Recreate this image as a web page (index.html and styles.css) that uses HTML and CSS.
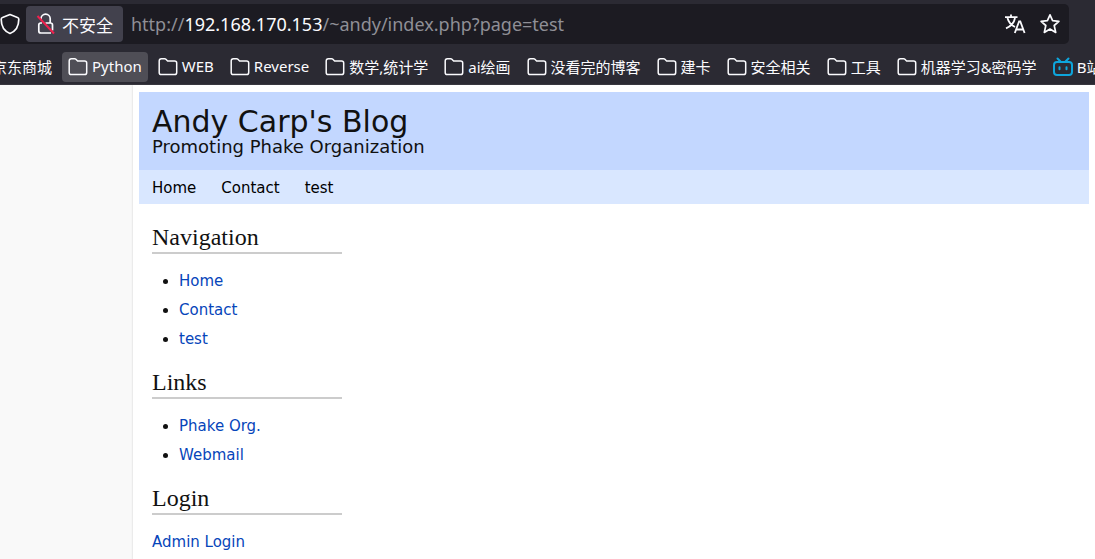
FILE: index.html
```html
<!DOCTYPE html>
<html lang="zh-CN">
<head>
<meta charset="utf-8">
<title>Andy Carp's Blog</title>
<link rel="stylesheet" href="styles.css">
</head>
<body>
<svg class="defs" aria-hidden="true">
  <symbol id="folder" viewBox="0 0 20 20"><path d="M1.2 15.5V4q0-2.2 2.2-2.2h3.200q.8 0 1.300.5l1.700 1.700h7q2.100 0 2.100 2.100v9.400q0 2.100-2.100 2.100H3.400q-2.200 0-2.200-2.100z" fill="none" stroke="currentColor" stroke-width="1.500" stroke-linejoin="round"/></symbol>
</svg>
<header class="chrome">
  <div class="urlbar">
    <button class="icon-button shield" aria-label="Tracking protection"><svg width="20" height="22" viewBox="0 0 20 22"><path d="M10 1.500 17.500 4.500c.9.300 1.300.9 1.300 1.800C18.800 13 16 18.200 10 20.500 4 18.200 1.200 13 1.200 6.300c0-.9.4-1.500 1.300-1.800z" fill="none" stroke="currentColor" stroke-width="1.700" stroke-linejoin="round"/></svg></button>
    <button class="security"><svg width="20" height="22" viewBox="0 0 20 22" fill="none" stroke="currentColor" stroke-width="1.700"><path d="M5 6.500V5.800a4.600 4.600 0 0 1 9.200 0v4M6 10H4.800q-2 0-2 2v6q0 2 2 2h10.200M9.500 10h5q2 0 2 2v5.500"/><path d="M1.500 3 18 20.500" stroke="#f0204e" stroke-width="2"/></svg><span>不安全</span></button>
    <div class="address" role="textbox" contenteditable="true" aria-label="Address" spellcheck="false">http://<span class="host">192.168.170.153</span>/~andy/index.php?page=test</div>
    <button class="icon-button" aria-label="Translate"><svg width="22" height="22" viewBox="0 0 22 22" fill="none" stroke="currentColor" stroke-width="1.800"><path d="M1 4.200h12.500M7 1.500v2.700M3.500 5c1 4.200 4.500 7.500 7.500 9M11 5c-.8 4.500-4.700 8.500-9 10.300M10.800 20l4.300-11.500h1.200L20.600 20M12.300 16.500h6.800"/></svg></button>
    <button class="icon-button" aria-label="Bookmark this page"><svg width="22" height="22" viewBox="0 0 22 22"><path d="m11 1.800 2.600 5.800 6.300.7-4.700 4.200 1.500 6.900L11 16.100l-5.700 3.300 1.500-6.900-4.700-4.200 6.300-.7z" fill="none" stroke="currentColor" stroke-width="1.700" stroke-linejoin="round"/></svg></button>
  </div>
  <nav class="bookmarks" aria-label="Bookmarks">
    <button class="bookmark">京东商城</button>
    <button class="bookmark active"><svg><use href="#folder"/></svg>Python</button>
    <button class="bookmark"><svg><use href="#folder"/></svg>WEB</button>
    <button class="bookmark"><svg><use href="#folder"/></svg>Reverse</button>
    <button class="bookmark"><svg><use href="#folder"/></svg>数学,统计学</button>
    <button class="bookmark"><svg><use href="#folder"/></svg>ai绘画</button>
    <button class="bookmark"><svg><use href="#folder"/></svg>没看完的博客</button>
    <button class="bookmark"><svg><use href="#folder"/></svg>建卡</button>
    <button class="bookmark"><svg><use href="#folder"/></svg>安全相关</button>
    <button class="bookmark"><svg><use href="#folder"/></svg>工具</button>
    <button class="bookmark"><svg><use href="#folder"/></svg>机器学习&amp;密码学</button>
    <button class="bookmark"><svg class="bili" viewBox="0 0 20 20" fill="none" stroke="currentColor" stroke-width="2" stroke-linecap="round"><rect x="1" y="5" width="18" height="13" rx="3"/><path d="m4.500 1.500 3 3M15.500 1.500l-3 3M6.500 10.300v2M13.500 10.300v2"/></svg>B站</button>
  </nav>
</header>
<div class="page">
  <header class="banner">
    <h1>Andy Carp's Blog</h1>
    <p>Promoting Phake Organization</p>
  </header>
  <nav class="menu"><a href="#">Home</a><a href="#">Contact</a><a href="#">test</a></nav>
  <aside class="sidebar">
    <section>
      <h2>Navigation</h2>
      <ul><li><a href="#">Home</a></li><li><a href="#">Contact</a></li><li><a href="#">test</a></li></ul>
    </section>
    <section>
      <h2>Links</h2>
      <ul><li><a href="#">Phake Org.</a></li><li><a href="#">Webmail</a></li></ul>
    </section>
    <section>
      <h2>Login</h2>
      <a href="#">Admin Login</a>
    </section>
  </aside>
</div>
</body>
</html>
```
FILE: styles.css
```css
* { box-sizing: border-box; }
html { overflow: hidden; }
body {
  margin: 0;
  min-height: 100vh;
  display: flex;
  flex-direction: column;
  background: #f9f9f9;
  font-family: "DejaVu Sans", Verdana, sans-serif;
  font-size: 15px;
  color: #111;
}
button {
  border: 0;
  padding: 0;
  background: none;
  color: #fbfbfe;
  font: inherit;
}
h1, h2, p, ul { margin: 0; font-weight: normal; }
.defs { position: absolute; width: 0; height: 0; }

.chrome {
  padding-top: 4px;
  background: #2b2a33;
  border-bottom: 1px solid #38373f;
  font-family: "Noto Sans", "Noto Sans CJK SC", sans-serif;
  overflow: hidden;
}
.urlbar {
  display: flex;
  align-items: center;
  height: 40px;
  margin-right: 26px;
  padding-right: 2px;
  background: #1c1b22;
  border-radius: 0 5px 5px 0;
}
.urlbar svg { display: block; flex: none; }
.icon-button {
  flex: none;
  display: grid;
  place-items: center;
  width: 35px;
  height: 32px;
}
.shield { width: 26px; padding-right: 10px; }
.security {
  flex: none;
  display: flex;
  align-items: center;
  gap: 6px;
  height: 36px;
  padding: 0 10px;
  border-radius: 4px;
  background: #42414d;
  font-size: 17px;
}
.address {
  flex: 1;
  margin-left: 8px;
  color: #8f8f96;
  font-family: "Noto Sans", sans-serif;
  font-size: 18px;
  white-space: nowrap;
}
.host { color: #fbfbfe; }

.bookmarks {
  display: flex;
  gap: 4px;
  margin-left: -14px;
  padding: 8px 0 2px;
}
.bookmark {
  flex: none;
  display: flex;
  align-items: center;
  gap: 4px;
  height: 30px;
  padding: 0 6px 2px;
  border-radius: 4px;
  font-size: 15px;
  white-space: nowrap;
}
.bookmark svg { width: 20px; height: 20px; margin-top: 2px; }
.active { background: #4f4e56; }
.bili { color: #0ea5dc; }

.page {
  flex: 1;
  margin-left: 133px;
  padding: 7px 6px 0;
  background: #fff;
  box-shadow: 0 0 2px #ccc;
  clip-path: inset(0 0 0 -3px);
}
.banner {
  height: 78px;
  padding: 13px 13px 0;
  background: #c3d7ff;
}
h1 { font-size: 30px; line-height: 34px; }
.banner p { font-size: 18px; line-height: 16px; }
.menu {
  display: flex;
  gap: 25px;
  padding: 9px 13px 7px;
  background: #d9e7ff;
  line-height: 18px;
}
.menu a { color: #000; }
a { color: #0645ba; text-decoration: none; }
.sidebar {
  width: 203px;
  padding: 20px 0 0 13px;
}
section { margin-bottom: 15px; }
h2 {
  margin-bottom: 13px;
  padding-bottom: 2px;
  border-bottom: 2px solid #ccc;
  font-family: Georgia, "Liberation Serif", serif;
  font-size: 24px;
  line-height: 26px;
}
ul { padding-left: 27px; }
section a { line-height: 29px; }
```
